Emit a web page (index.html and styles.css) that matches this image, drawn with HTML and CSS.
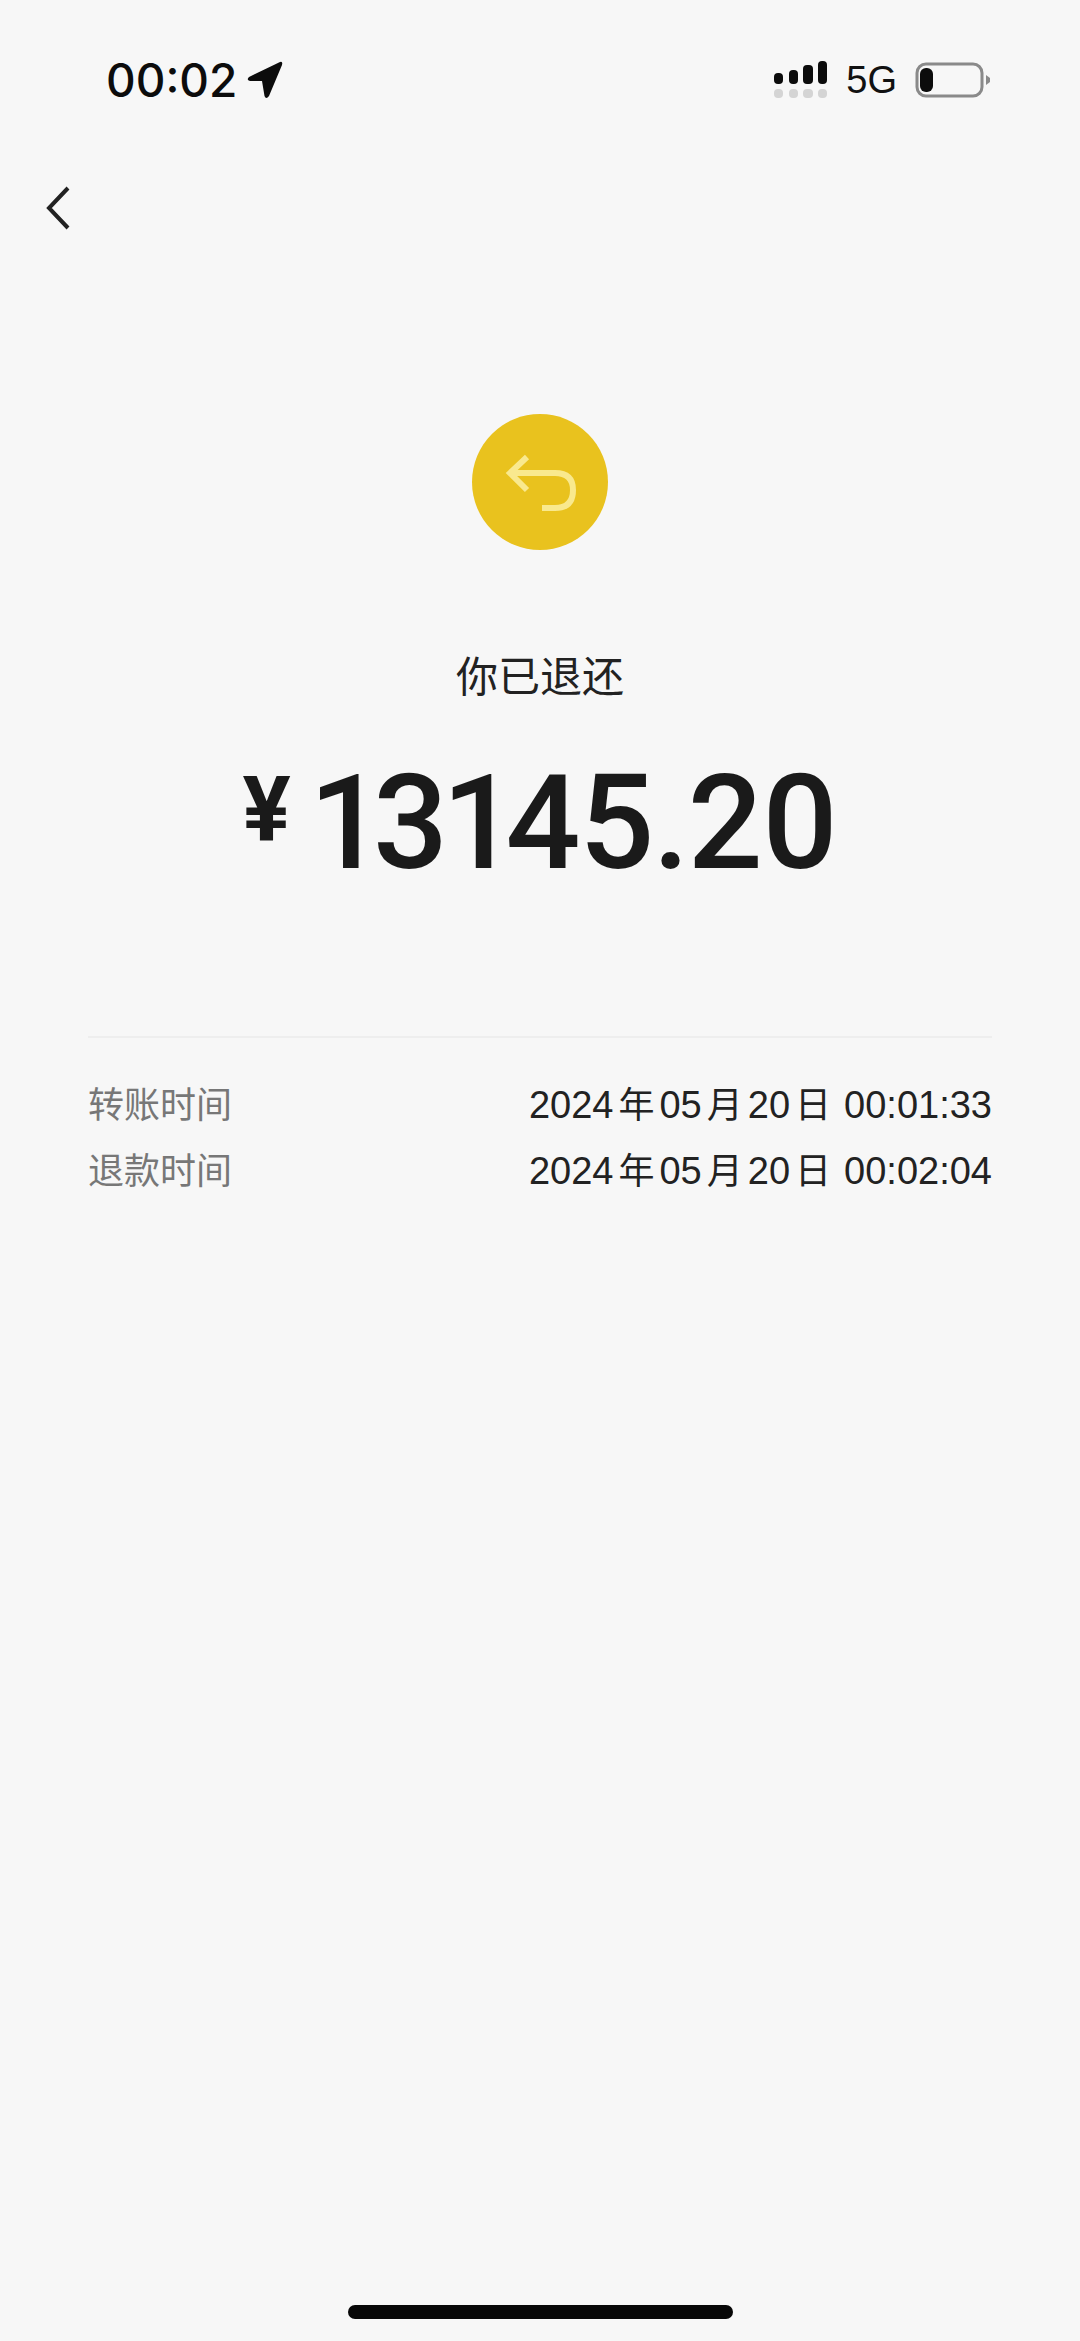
FILE: index.html
```html
<!DOCTYPE html>
<html lang="zh-CN">
<head>
  <meta charset="UTF-8" />
  <title>你已退还</title>
  <link rel="stylesheet" href="styles.css">
</head>
<body>

<div class="status-bar">
  <div class="status-left">
    <span class="clock">00:02</span>
    <svg class="location" width="36" height="38" viewBox="0 0 36 38">
      <path d="M2 16 L33 1 Q36 0 35 4 L22 35 Q19 39 17.500 35 L15 20 L3 20 Q-1 19 2 16 Z" fill="#0c0c0c" />
    </svg>
  </div>
  <div class="status-right">
    <svg class="signal" width="54" height="38" viewBox="0 0 54 38">
      <rect x="0" y="12" width="9" height="11" rx="4" fill="#0c0c0c" />
      <rect x="15" y="9" width="9" height="14" rx="4" fill="#0c0c0c" />
      <rect x="29" y="4" width="10" height="19" rx="4" fill="#0c0c0c" />
      <rect x="44" y="0" width="9" height="23" rx="4" fill="#0c0c0c" />
      <rect x="0" y="28" width="9" height="9" rx="4" fill="#d4d4d4" />
      <rect x="15" y="28" width="9" height="9" rx="4" fill="#d4d4d4" />
      <rect x="29" y="28" width="10" height="9" rx="4" fill="#d4d4d4" />
      <rect x="44" y="28" width="9" height="9" rx="4" fill="#d4d4d4" />
    </svg>
    <span class="network">5G</span>
    <svg class="battery" width="75" height="36" viewBox="0 0 75 36">
      <rect x="2" y="2" width="65" height="32" rx="9" fill="none" stroke="#8a8a8a" stroke-width="3" />
      <rect x="5" y="6" width="13" height="24" rx="6" fill="#0c0c0c" />
      <path d="M71 13 L75 16 L75 20 L71 23 Z" fill="#8a8a8a" />
    </svg>
  </div>
</div>

<div class="nav-bar">
  <svg class="back" width="26" height="44" viewBox="0 0 26 44">
    <path d="M22 2 L3 22 L22 42" fill="none" stroke="#222" stroke-width="4" />
  </svg>
</div>

<div class="summary">
  <div class="refund-icon">
    <svg width="72" height="60" viewBox="0 0 72 60">
      <path d="M23 5 L6 21 L23 38 M6 21 L51 21 Q69 21 69 38 Q69 56 51 56 L38 56" fill="none" stroke="#f9e98e" stroke-width="6" />
    </svg>
  </div>
  <div class="summary-title">你已退还</div>
  <div class="amount">
    <span class="currency">¥</span>
    <span class="amount-value">13145.20</span>
  </div>
</div>

<div class="details">
  <div class="detail-row">
    <span class="detail-label">转账时间</span>
    <span class="detail-value">2024<span class="date-unit">年</span>05<span class="date-unit">月</span>20<span class="date-unit">日</span><span class="detail-time">00:01:33</span></span>
  </div>
  <div class="detail-row">
    <span class="detail-label">退款时间</span>
    <span class="detail-value">2024<span class="date-unit">年</span>05<span class="date-unit">月</span>20<span class="date-unit">日</span><span class="detail-time">00:02:04</span></span>
  </div>
</div>

<div class="home-indicator"></div>

</body>
</html>
```

FILE: styles.css
```css
body {
  margin: 0;
  height: 2341px;
  background: #f7f7f7;
  color: #1a1a1a;
  font-family: "Liberation Sans", "Noto Sans CJK SC", sans-serif;
  display: flex;
  flex-direction: column;
  overflow: hidden;
}

.status-bar {
  height: 100px;
  padding: 30px 90px 0 106px;
  display: flex;
  justify-content: space-between;
  align-items: center;
  flex-shrink: 0;
}

.status-left {
  display: flex;
  align-items: center;
  gap: 10px;
}

.clock {
  font-family: Inter, sans-serif;
  font-size: 46px;
  font-weight: 500;
  color: #0c0c0c;
}

.status-right {
  display: flex;
  align-items: center;
  gap: 18px;
}

.network {
  font-size: 38px;
  color: #111;
}

.nav-bar {
  padding: 56px 0 0 46px;
  height: 228px;
  flex-shrink: 0;
}

.back {
  display: block;
}

.summary {
  display: flex;
  flex-direction: column;
  align-items: center;
}

.refund-icon {
  width: 136px;
  height: 136px;
  border-radius: 50%;
  background: #e9c21e;
  display: flex;
  align-items: center;
  justify-content: center;
}

.summary-title {
  margin-top: 98px;
  font-size: 42px;
  line-height: 60px;
  color: #222;
}

.amount {
  margin-top: 50px;
  display: flex;
  align-items: flex-start;
  gap: 23px;
  height: 130px;
}

.currency {
  font-family: Roboto, sans-serif;
  font-weight: 700;
  font-size: 90px;
  line-height: 106px;
}

.amount-value {
  font-family: Roboto, sans-serif;
  font-weight: 500;
  font-size: 132px;
  line-height: 130px;
  font-variant-numeric: proportional-nums;
  letter-spacing: -1.5px;
}

.details {
  margin: 148px 88px 0 88px;
  padding-top: 31px;
  border-top: 2px solid #eeeeee;
}

.detail-row {
  display: flex;
  justify-content: space-between;
  align-items: center;
  height: 66px;
}

.detail-label {
  font-size: 36px;
  color: #777;
}

.detail-value {
  font-size: 38px;
  color: #222;
}

.date-unit {
  font-size: 36px;
  margin: 0 5px;
}

.detail-time {
  margin-left: 8px;
}

.home-indicator {
  margin: auto auto 22px;
  width: 385px;
  height: 14px;
  border-radius: 7px;
  background: #070707;
  flex-shrink: 0;
}
```
